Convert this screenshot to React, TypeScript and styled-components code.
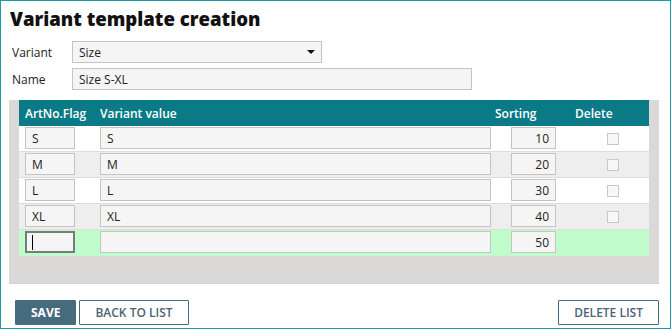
import React from 'react'
import styled, { createGlobalStyle } from 'styled-components'

const GlobalStyle = createGlobalStyle`
  html, body {
    margin: 0;
    padding: 0;
    background: #ffffff;
  }
  body {
    font-family: "Open Sans", "Liberation Sans", sans-serif;
    font-size: 12px;
    color: #222222;
  }
`

interface VariantRow {
  flag: string
  value: string
  sorting: number
}

const rows: VariantRow[] = [
  { flag: 'S', value: 'S', sorting: 10 },
  { flag: 'M', value: 'M', sorting: 20 },
  { flag: 'L', value: 'L', sorting: 30 },
  { flag: 'XL', value: 'XL', sorting: 40 },
]

const App: React.FC = () => {
  return (
    <>
      <GlobalStyle />
      <StyledFrame>
        <StyledTitle>Variant template creation</StyledTitle>
        <StyledForm>
          <StyledFieldRow>
            <StyledLabel>Variant</StyledLabel>
            <StyledSelect>
              <span>Size</span>
              <StyledArrow />
            </StyledSelect>
          </StyledFieldRow>
          <StyledFieldRow>
            <StyledLabel>Name</StyledLabel>
            <StyledTextBox width={400}>Size S-XL</StyledTextBox>
          </StyledFieldRow>
        </StyledForm>

        <StyledPanel>
          <StyledHeader>
            <StyledHeadCell pad={6}>ArtNo.Flag</StyledHeadCell>
            <StyledHeadCell pad={6}>Variant value</StyledHeadCell>
            <StyledHeadCell pad={4}>Sorting</StyledHeadCell>
            <StyledHeadCell pad={13}>Delete</StyledHeadCell>
          </StyledHeader>
          {rows.map((row, i) => (
            <StyledRow key={row.flag} tone={i % 2 === 0 ? 'white' : 'grey'}>
              <StyledCell pad={6}>
                <StyledTextBox width={50}>{row.flag}</StyledTextBox>
              </StyledCell>
              <StyledCell pad={6}>
                <StyledTextBox width={391}>{row.value}</StyledTextBox>
              </StyledCell>
              <StyledCell pad={20}>
                <StyledTextBox width={45} align="right">
                  {row.sorting}
                </StyledTextBox>
              </StyledCell>
              <StyledCell pad={45}>
                <StyledCheck />
              </StyledCell>
            </StyledRow>
          ))}
          <StyledRow tone="green">
            <StyledCell pad={6}>
              <StyledFocusBox>
                <StyledCaret />
              </StyledFocusBox>
            </StyledCell>
            <StyledCell pad={6}>
              <StyledTextBox width={391} />
            </StyledCell>
            <StyledCell pad={20}>
              <StyledTextBox width={45} align="right">
                50
              </StyledTextBox>
            </StyledCell>
            <StyledCell pad={45} />
          </StyledRow>
        </StyledPanel>

        <StyledActions>
          <StyledButtonGroup>
            <StyledButton primary>Save</StyledButton>
            <StyledButton>Back to list</StyledButton>
          </StyledButtonGroup>
          <StyledButton>Delete list</StyledButton>
        </StyledActions>
      </StyledFrame>
    </>
  )
}

const StyledFrame = styled.div`
  box-sizing: border-box;
  width: 671px;
  height: 329px;
  border: 1px solid #1b9ba5;
  padding: 0 11px 0 8px;
  display: flex;
  flex-direction: column;
`

const StyledTitle = styled.h1`
  margin: 5px 0 0 1px;
  font-size: 18.6px;
  line-height: 26px;
  font-weight: 800;
  color: #111111;
`

const StyledForm = styled.div`
  display: flex;
  flex-direction: column;
  gap: 5px;
  margin-top: 9px;
  padding-left: 3px;
`

const StyledFieldRow = styled.div`
  display: flex;
  align-items: center;
`

const StyledLabel = styled.div`
  width: 60px;
  font-size: 12px;
  color: #222222;
`

const StyledSelect = styled.div`
  box-sizing: border-box;
  width: 250px;
  height: 22px;
  border: 1px solid #c4c4c4;
  background: #f5f5f5;
  display: flex;
  align-items: center;
  justify-content: space-between;
  padding: 0 6px 0 6px;
  font-size: 12px;
`

const StyledArrow = styled.span`
  width: 0;
  height: 0;
  border-left: 4px solid transparent;
  border-right: 4px solid transparent;
  border-top: 4px solid #111111;
`

const StyledTextBox = styled.div<{ width?: number; align?: 'left' | 'right' }>`
  box-sizing: border-box;
  width: ${(p) => p.width ?? 100}px;
  height: 22px;
  border: 1px solid #c4c4c4;
  background: #f5f5f5;
  padding: 0 6px;
  display: flex;
  align-items: center;
  justify-content: ${(p) => (p.align === 'right' ? 'flex-end' : 'flex-start')};
  font-size: 12px;
  color: #222222;
`

const StyledFocusBox = styled.div`
  box-sizing: border-box;
  width: 50px;
  height: 22px;
  border: 2px solid #7a7a7a;
  background: #f5f5f5;
  display: flex;
  align-items: center;
  padding-left: 5px;
`

const StyledCaret = styled.span`
  width: 1px;
  height: 15px;
  background: #000000;
`

const StyledPanel = styled.div`
  margin-top: 10px;
  background: #dad9d7;
  padding: 0 10px 27px 10px;
  border-bottom: 1px solid #ccd5de;
`

const gridColumns = '75px 397px 71px 87px'

const StyledHeader = styled.div`
  display: grid;
  grid-template-columns: ${gridColumns};
  height: 26px;
  background: #0b7a87;
  color: #ffffff;
`

const StyledHeadCell = styled.div<{ pad: number }>`
  display: flex;
  align-items: center;
  padding-left: ${(p) => p.pad}px;
  font-size: 12px;
  font-weight: 600;
`

const rowColors = {
  white: '#ffffff',
  grey: '#eeeeee',
  green: '#c0fccc',
}

const StyledRow = styled.div<{ tone: keyof typeof rowColors }>`
  display: grid;
  grid-template-columns: ${gridColumns};
  height: 26px;
  box-sizing: border-box;
  background: ${(p) => rowColors[p.tone]};
  border-bottom: 1px solid ${(p) => (p.tone === 'green' ? '#c0fccc' : '#dddddd')};
  padding-top: 1px;
`

const StyledCell = styled.div<{ pad: number }>`
  display: flex;
  align-items: flex-start;
  padding-left: ${(p) => p.pad}px;
`

const StyledCheck = styled.span`
  box-sizing: border-box;
  margin-top: 6px;
  width: 12px;
  height: 12px;
  border: 1px solid #c8c8c8;
  background: #f7f7f7;
`

const StyledActions = styled.div`
  display: flex;
  justify-content: space-between;
  margin-top: 16px;
  padding-left: 6px;
`

const StyledButtonGroup = styled.div`
  display: flex;
  gap: 3px;
`

const StyledButton = styled.button<{ primary?: boolean }>`
  box-sizing: border-box;
  height: 25px;
  padding: 0 15px;
  border: 1px solid #466a7e;
  border-radius: 1px;
  background: ${(p) => (p.primary ? '#466a7e' : '#ffffff')};
  color: ${(p) => (p.primary ? '#ffffff' : '#4d6373')};
  font-family: "Open Sans", "Liberation Sans", sans-serif;
  font-size: 12px;
  font-weight: ${(p) => (p.primary ? 700 : 600)};
  text-transform: uppercase;
`

export default App
